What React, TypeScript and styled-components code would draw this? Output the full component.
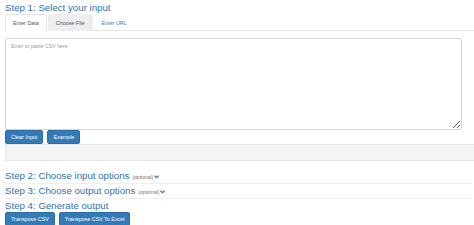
import React from "react";
import styled, { createGlobalStyle } from "styled-components";

const Global = createGlobalStyle`
  html, body { margin: 0; padding: 0; background: #fff; overflow: hidden; }
  body { font-family: "Liberation Sans", Arial, sans-serif; }
`;

const Page = styled.div`
  width: 474px;
  padding-left: 5px;
  box-sizing: border-box;
`;

const StepTitle = styled.div<{ $line?: boolean; $h?: number }>`
  color: #2f74b3;
  font-size: 9.7px;
  line-height: ${(p) => p.$h ?? 14}px;
  height: ${(p) => p.$h ?? 14}px;
  white-space: nowrap;
  display: flex;
  align-items: center;
  border-bottom: ${(p) => (p.$line ? "1px solid #eeeeee" : "none")};
  margin-right: 2px;
`;

const Optional = styled.span`
  color: #777;
  font-size: 5px;
  margin-left: 3px;
  margin-top: 2px;
`;

const Chevron = styled.svg`
  margin-left: 1px;
  margin-top: 2px;
`;

const Tabs = styled.div`
  display: flex;
  height: 16px;
  margin-top: -1px;
  border-bottom: 1px solid #e4e4e4;
  gap: 1px;
`;

const Tab = styled.div<{ $active?: boolean; $hover?: boolean }>`
  font-size: 5.4px;
  padding: 0 7px;
  display: flex;
  align-items: center;
  margin-bottom: -1px;
  color: ${(p) => (p.$active || p.$hover ? "#555" : "#337ab7")};
  background: ${(p) => (p.$active ? "#fff" : p.$hover ? "#eeeeee" : "transparent")};
  border: 1px solid ${(p) => (p.$active ? "#e4e4e4" : "transparent")};
  border-bottom-color: ${(p) => (p.$active ? "#fff" : "transparent")};
  border-radius: 2px 2px 0 0;
`;

const Content = styled.div`
  padding-top: 7px;
`;

const Area = styled.textarea`
  display: block;
  width: 457px;
  height: 92px;
  box-sizing: border-box;
  margin: 0;
  border: 1px solid #d4d4d4;
  border-radius: 2px;
  padding: 4px 5px;
  font-family: "Liberation Sans", Arial, sans-serif;
  font-size: 5.2px;
  outline: none;
  &::placeholder { color: #9a9a9a; }
`;

const ButtonRow = styled.div<{ $top?: number }>`
  display: flex;
  gap: 4px;
  margin-top: ${(p) => p.$top ?? 0}px;
`;

const Button = styled.button`
  height: 14px;
  padding: 0 5px;
  margin: 0;
  background: #337ab7;
  border: 1px solid #2e6da4;
  border-radius: 2px;
  color: #fff;
  font-family: "Liberation Sans", Arial, sans-serif;
  font-size: 5.4px;
  line-height: 12px;
  cursor: pointer;
`;

const Well = styled.div`
  height: 17px;
  box-sizing: border-box;
  background: #f4f4f4;
  border: 1px solid #e6e6e6;
  border-right: none;
`;

const Steps = styled.div`
  margin-top: 8px;
`;

const ChevronIcon = () => (
  <Chevron width="5" height="4" viewBox="0 0 10 7">
    <path d="M1 1 L5 5 L9 1" fill="none" stroke="#337ab7" strokeWidth="2.4" />
  </Chevron>
);

export default function App() {
  return (
    <Page>
      <Global />
      <StepTitle style={{ marginTop: 1 }}>Step 1: Select your input</StepTitle>
      <Tabs>
        <Tab $active>Enter Data</Tab>
        <Tab $hover>Choose File</Tab>
        <Tab>Enter URL</Tab>
      </Tabs>
      <Content>
        <Area placeholder="Enter or paste CSV here" />
        <ButtonRow>
          <Button>Clear Input</Button>
          <Button>Example</Button>
        </ButtonRow>
        <Well />
      </Content>
      <Steps>
        <StepTitle $line>
          Step 2: Choose input options<Optional>(optional)</Optional>
          <ChevronIcon />
        </StepTitle>
        <StepTitle $line>
          Step 3: Choose output options<Optional>(optional)</Optional>
          <ChevronIcon />
        </StepTitle>
        <StepTitle $h={12} style={{ marginTop: 1 }}>Step 4: Generate output</StepTitle>
        <ButtonRow $top={0}>
          <Button>Transpose CSV</Button>
          <Button>Transpose CSV To Excel</Button>
        </ButtonRow>
      </Steps>
    </Page>
  );
}
